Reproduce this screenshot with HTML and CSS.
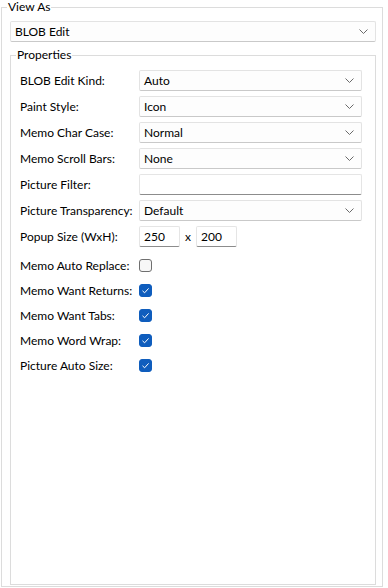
FILE: index.html
```html
<!DOCTYPE html>
<html lang="en">
<head>
    <meta charset="UTF-8">
    <title>View As</title>
    <link rel="stylesheet" href="styles.css">
</head>
<body>
    <fieldset class="group outer">
        <legend>View As</legend>

        <div class="combo wide">
            <span>BLOB Edit</span>
            <svg class="chev" width="9" height="5" viewBox="0 0 9 5"><path d="M0.5 0.5 L4.5 4.5 L8.5 0.5" fill="none" stroke="#6a6a6a" stroke-width="1"/></svg>
        </div>

        <fieldset class="group props">
            <legend>Properties</legend>

            <div class="rows">
                <label>BLOB Edit Kind:</label>
                <div class="combo">
                    <span>Auto</span>
                    <svg class="chev" width="9" height="5" viewBox="0 0 9 5"><path d="M0.5 0.5 L4.5 4.5 L8.5 0.5" fill="none" stroke="#6a6a6a" stroke-width="1"/></svg>
                </div>

                <label>Paint Style:</label>
                <div class="combo">
                    <span>Icon</span>
                    <svg class="chev" width="9" height="5" viewBox="0 0 9 5"><path d="M0.5 0.5 L4.5 4.5 L8.5 0.5" fill="none" stroke="#6a6a6a" stroke-width="1"/></svg>
                </div>

                <label>Memo Char Case:</label>
                <div class="combo">
                    <span>Normal</span>
                    <svg class="chev" width="9" height="5" viewBox="0 0 9 5"><path d="M0.5 0.5 L4.5 4.5 L8.5 0.5" fill="none" stroke="#6a6a6a" stroke-width="1"/></svg>
                </div>

                <label>Memo Scroll Bars:</label>
                <div class="combo">
                    <span>None</span>
                    <svg class="chev" width="9" height="5" viewBox="0 0 9 5"><path d="M0.5 0.5 L4.5 4.5 L8.5 0.5" fill="none" stroke="#6a6a6a" stroke-width="1"/></svg>
                </div>

                <label>Picture Filter:</label>
                <div class="edit"></div>

                <label>Picture Transparency:</label>
                <div class="combo">
                    <span>Default</span>
                    <svg class="chev" width="9" height="5" viewBox="0 0 9 5"><path d="M0.5 0.5 L4.5 4.5 L8.5 0.5" fill="none" stroke="#6a6a6a" stroke-width="1"/></svg>
                </div>

                <label>Popup Size (WxH):</label>
                <div class="size">
                    <div class="edit small">250</div>
                    <span class="x">x</span>
                    <div class="edit small">200</div>
                </div>
            </div>

            <div class="checks">
                <label>Memo Auto Replace:</label>
                <span class="check"></span>

                <label>Memo Want Returns:</label>
                <span class="check on"><svg width="13" height="13" viewBox="0 0 13 13"><path d="M3.5 6.8 L5.6 8.8 L9.6 4.4" fill="none" stroke="#fff" stroke-width="1"/></svg></span>

                <label>Memo Want Tabs:</label>
                <span class="check on"><svg width="13" height="13" viewBox="0 0 13 13"><path d="M3.5 6.8 L5.6 8.8 L9.6 4.4" fill="none" stroke="#fff" stroke-width="1"/></svg></span>

                <label>Memo Word Wrap:</label>
                <span class="check on"><svg width="13" height="13" viewBox="0 0 13 13"><path d="M3.5 6.8 L5.6 8.8 L9.6 4.4" fill="none" stroke="#fff" stroke-width="1"/></svg></span>

                <label>Picture Auto Size:</label>
                <span class="check on"><svg width="13" height="13" viewBox="0 0 13 13"><path d="M3.5 6.8 L5.6 8.8 L9.6 4.4" fill="none" stroke="#fff" stroke-width="1"/></svg></span>
            </div>
        </fieldset>
    </fieldset>
</body>
</html>
```

FILE: styles.css
```css
html, body {
    margin: 0;
    background: #fff;
}
body {
    font-family: Lato, "Noto Sans", sans-serif;
    font-size: 12px;
    color: #000;
}
label {
    white-space: nowrap;
}
.group {
    border: 1px solid #dcdcdc;
    box-sizing: border-box;
    min-width: 0;
}
.group legend {
    padding: 0 1px;
    line-height: 14px;
}
.outer {
    margin: 0 5px 1px 1px;
    height: 587px;
    padding: 7px 6px 6px 8px;
}
.outer > legend {
    margin-left: -3px;
}
.props {
    margin: 6px 0 0 0;
    height: 537px;
    padding: 8px 13px 0 9px;
}
.props > legend {
    margin-left: -4px;
}
.combo, .edit {
    box-sizing: border-box;
    height: 21px;
    display: flex;
    align-items: center;
    padding: 0 6px 0 4px;
    background: #fdfdfd;
    border: 1px solid #e3e3e3;
    border-bottom-color: #c9c9c9;
    border-radius: 2px;
}
.combo span {
    flex: 1;
}
.chev {
    margin-right: 1px;
}
.edit {
    background: #fff;
    border-color: #e5e5e5;
    border-bottom-color: #8c8c8c;
}
.rows {
    display: grid;
    grid-template-columns: 119px 1fr;
    row-gap: 5px;
    align-items: center;
}
.size {
    display: flex;
    align-items: center;
}
.edit.small {
    width: 41px;
}
.x {
    width: 16px;
    text-align: center;
}
.checks {
    display: grid;
    grid-template-columns: 119px 13px;
    grid-auto-rows: 25px;
    align-items: center;
    margin-top: 6px;
}
.check {
    box-sizing: border-box;
    width: 13px;
    height: 13px;
    border: 1px solid #6f6f6f;
    border-radius: 3px;
    background: #f7f7f7;
    display: block;
}
.check.on {
    background: #0f5dbd;
    border-color: #0f5dbd;
}
.check.on svg {
    display: block;
    margin: -1px;
}
```
